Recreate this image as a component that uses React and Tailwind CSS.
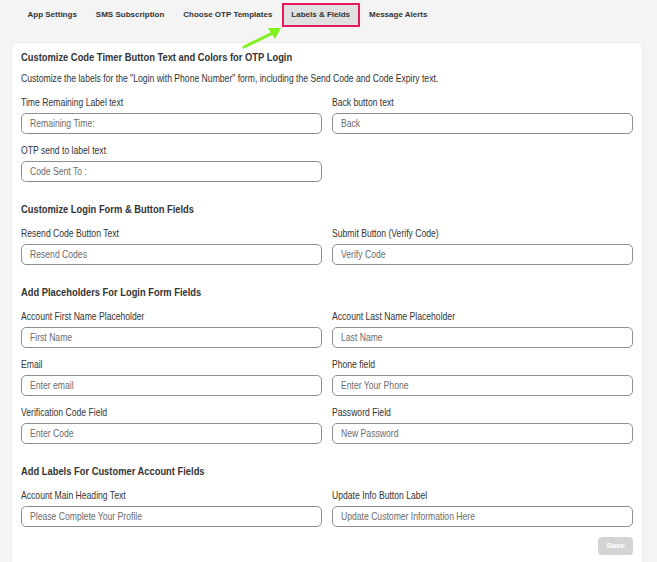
const tabs = [
  { id: "app", label: "App Settings" },
  { id: "sms", label: "SMS Subscription" },
  { id: "otp", label: "Choose OTP Templates" },
  { id: "labels", label: "Labels & Fields" },
  { id: "alerts", label: "Message Alerts" },
];

const sections = [
  {
    title: "Customize Code Timer Button Text and Colors for OTP Login",
    desc: 'Customize the labels for the "Login with Phone Number" form, including the Send Code and Code Expiry text.',
    fields: [
      { label: "Time Remaining Label text", value: "Remaining Time:" },
      { label: "Back button text", value: "Back" },
      { label: "OTP send to label text", value: "Code Sent To :" },
    ],
  },
  {
    title: "Customize Login Form & Button Fields",
    fields: [
      { label: "Resend Code Button Text", value: "Resend Codes" },
      { label: "Submit Button (Verify Code)", value: "Verify Code" },
    ],
  },
  {
    title: "Add Placeholders For Login Form Fields",
    fields: [
      { label: "Account First Name Placeholder", value: "First Name" },
      { label: "Account Last Name Placeholder", value: "Last Name" },
      { label: "Email", value: "Enter email" },
      { label: "Phone field", value: "Enter Your Phone" },
      { label: "Verification Code Field", value: "Enter Code" },
      { label: "Password Field", value: "New Password" },
    ],
  },
  {
    title: "Add Labels For Customer Account Fields",
    fields: [
      { label: "Account Main Heading Text", value: "Please Complete Your Profile" },
      { label: "Update Info Button Label", value: "Update Customer Information Here" },
    ],
  },
];

// the screenshot's text is a narrow face, squeeze Liberation Sans to match
function Narrow({ children, className = "" }) {
  return (
    <span className={`inline-block origin-left scale-x-[0.82] whitespace-nowrap ${className}`}>
      {children}
    </span>
  );
}

function Field({ label, value }) {
  return (
    <div className="flex flex-col">
      <label className="text-[10.5px] leading-[12px] text-[#333] mb-[5px]">
        <Narrow>{label}</Narrow>
      </label>
      <div className="h-[21px] w-full rounded-[5px] border border-[#8f8f8f] bg-white px-[8px] flex items-center text-[10.5px] text-[#6b6b6b]">
        <Narrow>{value}</Narrow>
      </div>
    </div>
  );
}

export default function App() {
  return (
    <div className="relative min-h-[562px] bg-[#f4f4f4] overflow-hidden font-['Liberation_Sans',Arial,sans-serif]">
      {/* Tabs */}
      <div className="flex pl-[18px] pt-[3px]">
        {tabs.map((tab) => (
          <button
            key={tab.id}
            type="button"
            className={`h-[24px] px-[7.5px] border-2 text-[8px] font-bold text-[#333] whitespace-nowrap ${
              tab.id === "labels" ? "border-[#e8195a] bg-[#e0e0e0]" : "border-transparent"
            }`}
          >
            {tab.label}
          </button>
        ))}
      </div>

      {/* Green arrow pointing at the active tab */}
      <svg className="absolute left-[240px] top-[24px]" width="46" height="28" viewBox="0 0 46 28">
        <line x1="4" y1="23" x2="35" y2="8" stroke="#7ef21c" strokeWidth="3" strokeLinecap="round" />
        <polygon points="41,4 28,4 35,15" fill="#7ef21c" />
      </svg>

      {/* Card */}
      <div className="mt-[15px] ml-[11px] w-[632px] rounded-[6px] bg-white border border-[#ececec] px-[9px] pt-[7px] pb-[20px]">
        <div className="flex flex-col gap-[20px]">
          {sections.map((s, i) => (
            <div key={i}>
              <h3 className="text-[11px] leading-[14px] font-bold text-[#333]">
                <span className="inline-block origin-left scale-x-[0.85] whitespace-nowrap">{s.title}</span>
              </h3>
              {s.desc ? (
                <p className="mt-[8px] mb-[12px] text-[10.5px] leading-[12px] text-[#333]">
                  <Narrow>{s.desc}</Narrow>
                </p>
              ) : (
                <div className="h-[11px]" />
              )}
              <div className="grid grid-cols-2 gap-x-[10px] gap-y-[10px]">
                {s.fields.map((f) => (
                  <Field key={f.label} label={f.label} value={f.value} />
                ))}
              </div>
            </div>
          ))}
        </div>
        <div className="flex justify-end mt-[10px]">
          <button
            type="button"
            disabled
            className="h-[18px] w-[35px] rounded-[4px] bg-[#d4d4d4] text-[8px] font-bold text-white"
          >
            Save
          </button>
        </div>
      </div>
    </div>
  );
}
